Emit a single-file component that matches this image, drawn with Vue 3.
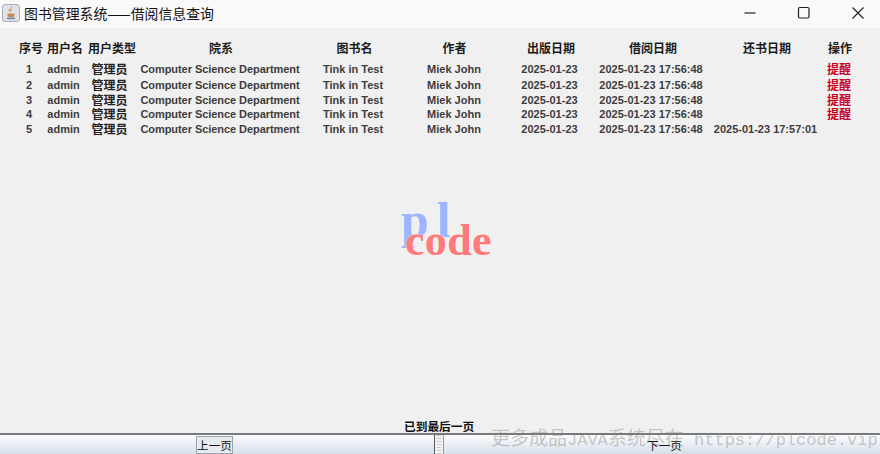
<script setup>
const heads = ['序号','用户名','用户类型','院系','图书名','作者','出版日期','借阅日期','还书日期','操作']
const returned = ['','','','','2025-01-23 17:57:01']
const rows = [1,2,3,4,5].map((n,i)=>({
  n, ret: returned[i], remind: i<4
}))
</script>

<template>
  <div class="win">
    <header class="titlebar">
      <svg class="appicon" width="20" height="20" viewBox="0 0 20 20">
        <rect x="1.5" y="1.5" width="17" height="17" rx="2.5" fill="#dfe3e8" stroke="#a9afb8"/>
        <path d="M5.5 14.5h9l-1 1.8h-7z" fill="#7d8791"/>
        <path d="M6.5 10.5h7v2.2a2 2 0 0 1-2 1.4h-3a2 2 0 0 1-2-1.4z" fill="#c58a5c"/>
        <path d="M10.4 3.5c1 1.8-1.5 2.6-.6 5M8.2 6c-.6 1 .2 1.6.2 2.5" stroke="#cf7a52" stroke-width="1" fill="none"/>
      </svg>
      <span class="title">图书管理系统——借阅信息查询</span>
      <div class="controls">
        <svg width="14" height="14" viewBox="0 0 14 14"><path d="M1.5 7h11" stroke="#222" stroke-width="1.2"/></svg>
        <svg width="14" height="14" viewBox="0 0 14 14"><rect x="1.5" y="1.5" width="10.5" height="10.5" rx="1.4" fill="none" stroke="#222" stroke-width="1.2"/></svg>
        <svg width="14" height="14" viewBox="0 0 14 14"><path d="M1.5 1.5l11 11M12.5 1.5l-11 11" stroke="#222" stroke-width="1.1"/></svg>
      </div>
    </header>

    <main class="content">
      <div class="table">
        <div class="row head">
          <span v-for="h in heads" :key="h" class="cell">{{ h }}</span>
        </div>
        <div v-for="r in rows" :key="r.n" class="row body">
          <span class="cell num">{{ r.n }}</span>
          <span class="cell user">admin</span>
          <span class="cell cjk">管理员</span>
          <span class="cell dept">Computer Science Department</span>
          <span class="cell">Tink in Test</span>
          <span class="cell">Miek John</span>
          <span class="cell pub">2025-01-23</span>
          <span class="cell">2025-01-23 17:56:48</span>
          <span class="cell ret">{{ r.ret }}</span>
          <span class="cell remind">{{ r.remind ? '提醒' : '' }}</span>
        </div>
      </div>
      <p class="status">已到最后一页</p>
    </main>

    <footer class="split">
      <div class="pane left"><button class="btn focus">上一页</button></div>
      <div class="divider"></div>
      <div class="pane right"><button class="btn">下一页</button></div>
    </footer>

    <div class="logo"><span class="pl">pl</span><span class="code">code</span></div>
    <div class="mark"><span class="wm-cjk">更多成品</span>JAVA<span class="wm-cjk">系统尽在</span> https://plcode.vip</div>
  </div>
</template>

<style>
html, body { margin: 0; background: #f0f0f0; }
</style>

<style scoped>
.win {
  position: relative;
  width: 880px;
  height: 454px;
  overflow: hidden;
  display: flex;
  flex-direction: column;
  background: #f0f0f0;
  font-family: "Liberation Sans", "Noto Sans CJK SC", sans-serif;
  color: #333;
}
.titlebar {
  height: 28px;
  flex: none;
  box-sizing: border-box;
  padding: 0 0 2px 1px;
  display: flex;
  align-items: center;
  background: #f9f9fa;
}
.appicon { flex: none; }
.title {
  margin-left: 3px;
  font-size: 13.9px;
  color: #111;
  font-family: "Noto Sans CJK SC", sans-serif;
  white-space: nowrap;
}
.controls {
  margin-left: auto;
  display: flex;
  gap: 40px;
  padding-right: 15px;
  align-items: center;
}
.content {
  flex: 1;
  min-height: 0;
  display: flex;
  flex-direction: column;
  justify-content: space-between;
  padding-top: 13px;
}
.table {
  display: grid;
  padding-left: 14px;
  grid-template-columns: 34px 34px 60px 158px 106px 96px 98px 102px 130px 16px;
  grid-template-rows: 20px 16px 16px 14px 14px 15px;
  width: 866px;
  box-sizing: border-box;
}
.row { display: contents; }
.cell {
  justify-self: center;
  align-self: center;
  white-space: nowrap;
  line-height: 14px;
}
.head .cell {
  align-self: start;
  font-size: 12px;
  font-weight: 700;
  color: #1c1c1c;
  font-family: "Noto Sans CJK SC", sans-serif;
}
.head .cell:nth-child(5) { padding-left: 3px; }
.head .cell:nth-child(6) { padding-left: 1px; }
.head .cell:nth-child(8) { padding-left: 4px; }
.body .cell {
  font-size: 11px;
  font-weight: 700;
  color: #3d3d3d;
}
.body .num { padding-right: 4px; }
.body .user { padding-right: 3px; }
.body .pub { padding-right: 3px; }
.body .ret { padding-right: 3px; }
.body .dept { letter-spacing: -0.06px; padding-right: 2px; }
.body .cjk {
  padding-right: 5px;
  font-size: 12px;
  color: #222;
  font-family: "Noto Sans CJK SC", sans-serif;
}
.body .remind {
  padding-right: 2px;
  font-size: 12px;
  color: #c8001e;
  font-family: "Noto Sans CJK SC", sans-serif;
}
.status {
  margin: 0 0 0 404px;
  font-size: 11.7px;
  font-weight: 700;
  line-height: 14px;
  color: #111;
  font-family: "Noto Sans CJK SC", sans-serif;
}
.split {
  flex: none;
  height: 21px;
  display: flex;
  border-top: 2px solid #77797b;
  box-sizing: border-box;
}
.pane {
  display: flex;
  justify-content: center;
  background: linear-gradient(#fbfcfd, #d6dfe9);
}
.left { flex: none; width: 434px; box-sizing: border-box; padding-right: 5px; }
.right { flex: 1; padding-left: 5px; }
.divider {
  flex: none;
  width: 10px;
  box-sizing: border-box;
  background: repeating-linear-gradient(#c9c9c9 0 1px, #f2f2f2 1px 3px);
  background-clip: content-box;
  padding: 0 2px;
  border-left: 1px solid #555;
  border-right: 1px solid #9a9a9a;
}
.btn {
  margin: 1px 0 0;
  padding: 0;
  height: 18px;
  border: 1px solid transparent;
  background: none;
  font-size: 11.6px;
  line-height: 14px;
  color: #111;
  font-family: "Noto Sans CJK SC", sans-serif;
}
.btn.focus { border-color: #9aa2ab; background: #e6ebf0; }
.logo {
  position: absolute;
  left: 400px;
  top: 195px;
  width: 100px;
  height: 70px;
  font-family: "Liberation Serif", serif;
  font-weight: 700;
}
.pl {
  position: absolute;
  left: 1px;
  top: 0;
  font-size: 50px;
  line-height: 50px;
  letter-spacing: 8px;
  color: #9db5ff;
}
.code {
  position: absolute;
  left: 5px;
  top: 24px;
  font-size: 44px;
  line-height: 44px;
  letter-spacing: 0.3px;
  color: #ff7a7a;
  text-shadow: 0 0 2px #f5f5f5;
}
.mark {
  position: absolute;
  left: 491px;
  top: 427px;
  font-size: 17px;
  line-height: 20px;
  white-space: nowrap;
  color: rgba(130,130,130,.42);
  font-family: "Liberation Mono", monospace;
}
.wm-cjk {
  font-size: 19px;
  font-family: "Noto Sans CJK SC", sans-serif;
}
</style>
